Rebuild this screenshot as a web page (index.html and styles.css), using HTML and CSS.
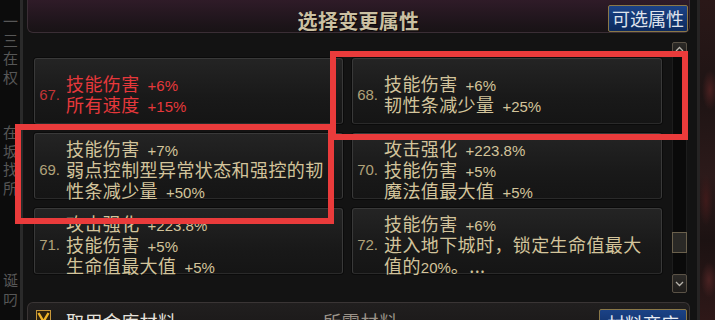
FILE: index.html
```html
<!DOCTYPE html>
<html lang="zh">
<head>
<meta charset="utf-8">
<title>选择变更属性</title>
<link rel="stylesheet" href="styles.css">
</head>
<body>
<div class="screen">
  <div class="side-left">
    <span>一</span><span>三</span><span>在</span><span>权</span><span></span><span></span><span>在</span><span>坂</span><span>找</span><span>所</span><span></span><span></span><span></span><span></span><span>诞</span><span>叼</span>
  </div>
  <div class="frame">
    <header class="titlebar">
      <div></div>
      <h1 class="title">选择变更属性</h1>
      <button class="btn-blue btn-top">可选属性</button>
    </header>
    <div class="content">
      <div class="grid">
        <div class="cell red">
          <div class="num">67.</div>
          <div class="lines">
            <div class="line">技能伤害<span class="val">+6%</span></div>
            <div class="line">所有速度<span class="val">+15%</span></div>
          </div>
        </div>
        <div class="cell">
          <div class="num">68.</div>
          <div class="lines">
            <div class="line">技能伤害<span class="val">+6%</span></div>
            <div class="line">韧性条减少量<span class="val">+25%</span></div>
          </div>
        </div>
        <div class="cell">
          <div class="num">69.</div>
          <div class="lines">
            <div class="line">技能伤害<span class="val">+7%</span></div>
            <div class="line">弱点控制型异常状态和强控的韧</div>
            <div class="line">性条减少量<span class="val">+50%</span></div>
          </div>
        </div>
        <div class="cell">
          <div class="num">70.</div>
          <div class="lines">
            <div class="line">攻击强化<span class="val">+223.8%</span></div>
            <div class="line">技能伤害<span class="val">+5%</span></div>
            <div class="line">魔法值最大值<span class="val">+5%</span></div>
          </div>
        </div>
        <div class="cell">
          <div class="num">71.</div>
          <div class="lines">
            <div class="line">攻击强化<span class="val">+223.8%</span></div>
            <div class="line">技能伤害<span class="val">+5%</span></div>
            <div class="line">生命值最大值<span class="val">+5%</span></div>
          </div>
        </div>
        <div class="cell">
          <div class="num">72.</div>
          <div class="lines">
            <div class="line">技能伤害<span class="val">+6%</span></div>
            <div class="line">进入地下城时，锁定生命值最大</div>
            <div class="line">值的<span class="inl">20%</span>。...</div>
          </div>
        </div>
      </div>
      <div class="scrollbar">
        <div class="sb-btn sb-up"><svg width="13" height="12" viewBox="0 0 13 12"><path d="M3 8 L6.5 4.5 L10 8" stroke="#b8b4ac" stroke-width="1.3" fill="none"/></svg></div>
        <div class="sb-track"><div class="sb-thumb"></div></div>
        <div class="sb-btn sb-down"><svg width="13" height="17" viewBox="0 0 13 17"><path d="M3 7 L6.5 10.5 L10 7" stroke="#b8b4ac" stroke-width="1.3" fill="none"/></svg></div>
      </div>
    </div>
    <footer class="bottombar">
      <svg class="check" width="15" height="15" viewBox="0 0 15 15"><rect x="0.5" y="0.5" width="14" height="14" fill="#2e2210" stroke="#c8983a"/><path d="M2.5 3 L7.5 11.5 L12.5 3" stroke="#f0b428" stroke-width="2.4" fill="none"/></svg>
      <span class="vault">取用金库材料</span>
      <span class="need">所需材料</span>
      <button class="btn-blue btn-shop">材料商店</button>
    </footer>
  </div>
  <div class="side-right"></div>
  <div class="mark mark-1"></div>
  <div class="mark mark-2"></div>
</div>
</body>
</html>
```
FILE: styles.css
```css
* { box-sizing: border-box; margin: 0; padding: 0; }
body {
  margin: 0;
  width: 715px;
  height: 320px;
  overflow: hidden;
  background: #0f0f0f;
  font-family: "Noto Sans CJK SC", sans-serif;
}
.screen {
  position: relative;
  display: flex;
  width: 715px;
  height: 320px;
  overflow: hidden;
}
.side-left {
  width: 20px;
  flex: none;
  padding-top: 12px;
  font-size: 15px;
  line-height: 18.5px;
  color: #575757;
  background: #0c0c0c;
  overflow: hidden;
}
.side-left span {
  display: block;
  height: 18.5px;
  margin-left: 3px;
  white-space: nowrap;
}
.frame {
  width: 680px;
  flex: none;
  display: flex;
  flex-direction: column;
  background: #131313;
  border-left: 3px solid #2a2a2a;
  border-right: 3px solid #262424;
  padding-left: 4px;
  padding-right: 7px;
}
.titlebar {
  height: 33px;
  flex: none;
  display: grid;
  grid-template-columns: 1fr auto 1fr;
  align-items: start;
  background: linear-gradient(#2f1b28, #1c1419 80%, #191316);
  border: 1px solid #3a2e35;
  border-top: none;
  border-radius: 0 0 6px 6px;
}
.title {
  margin-top: 10px;
  font-size: 20px;
  line-height: 22px;
  font-weight: 700;
  letter-spacing: 0.3px;
  color: #cbc0a2;
  text-shadow: 1px 1px 0 #0a0608;
}
.btn-blue {
  font-family: "Noto Sans CJK SC", sans-serif;
  font-size: 18px;
  line-height: 25px;
  color: #dfe3ec;
  background: linear-gradient(#1b4286, #0c2a5e);
  border: 1px solid #8a7848;
  border-radius: 2px;
  padding: 0 3px;
}
.btn-top {
  justify-self: end;
  margin-top: 5px;
  margin-right: 1px;
  width: 80px;
  height: 27px;
}
.content {
  height: 269px;
  flex: none;
  display: flex;
  align-items: flex-start;
}
.grid {
  margin-top: 25px;
  margin-left: 7px;
  display: grid;
  grid-template-columns: 309px 310px;
  grid-auto-rows: 66px;
  column-gap: 9px;
  row-gap: 9px;
}
.cell {
  display: flex;
  align-items: center;
  padding-top: 6px;
  background: linear-gradient(#242424, #191919 60%, #151515);
  border: 1px solid #393939;
  border-bottom-color: #2a2a2a;
  border-radius: 3px;
  box-shadow: 0 0 0 1px #0b0b0b;
  color: #d3c49b;
  white-space: nowrap;
}
.num {
  width: 25px;
  flex: none;
  text-align: right;
  font-family: "Liberation Sans", sans-serif;
  font-size: 15px;
  color: #b0a27a;
  margin-right: 6px;
}
.lines { display: flex; flex-direction: column; }
.line {
  font-size: 18px;
  line-height: 21px;
  letter-spacing: 0.4px;
  height: 21px;
}
.val {
  font-family: "Liberation Sans", sans-serif;
  font-size: 15px;
  letter-spacing: 0;
  margin-left: 8px;
}
.inl {
  font-family: "Liberation Sans", sans-serif;
  font-size: 15px;
  letter-spacing: 0;
}
.cell.red { color: #e6383b; }
.cell.red .num { color: #c23436; }
.scrollbar {
  width: 15px;
  height: 251px;
  margin-top: 9px;
  margin-left: 10px;
  display: flex;
  flex-direction: column;
}
.sb-btn {
  display: flex;
  align-items: center;
  justify-content: center;
  background: linear-gradient(#2c2a27, #1e1c1a);
  border: 1px solid #5a5246;
  border-radius: 2px;
}
.sb-up { height: 14px; }
.sb-down { height: 19px; }
.sb-track {
  flex: 1;
  padding-top: 176px;
  background: #0a0a0a;
  border-left: 1px solid #1d1d1d;
  border-right: 1px solid #1d1d1d;
}
.sb-thumb {
  height: 21px;
  margin: 0 -1px;
  background: #2a2926;
  border: 1px solid #6a604c;
}
.bottombar {
  height: 30px;
  flex: none;
  display: flex;
  align-items: flex-start;
  padding: 7px 2px 0 8px;
  background: linear-gradient(#211f1f, #1a1818);
  border: 1px solid #3a3535;
  border-bottom: none;
  border-radius: 6px 6px 0 0;
}
.check { flex: none; margin-top: 0; }
.vault {
  width: 257px;
  margin-left: 15px;
  font-size: 18px;
  line-height: 22px;
  letter-spacing: 0.4px;
  color: #e6e2dc;
}
.need {
  font-size: 18px;
  line-height: 22px;
  letter-spacing: 0.8px;
  color: #9a9288;
}
.btn-shop {
  margin-left: auto;
  margin-top: -1px;
  width: 88px;
  height: 28px;
  color: #e8ecf4;
}
.side-right {
  width: 15px;
  flex: none;
  background:
    radial-gradient(ellipse 8px 20px at 10px 90px, #4a2020, transparent),
    radial-gradient(ellipse 7px 26px at 6px 200px, #3e1a1a, transparent),
    radial-gradient(ellipse 8px 18px at 9px 280px, #4a2222, transparent),
    linear-gradient(#2a1818, #1e1414 30%, #2c1a1a 55%, #1c1212 75%, #2e1818);
}
.mark {
  position: absolute;
  border: 6px solid #ea3b3b;
  pointer-events: none;
}
.mark-1 { left: 330px; top: 51px; width: 358px; height: 89px; }
.mark-2 { left: 15px; top: 124px; width: 319px; height: 100px; }
```
